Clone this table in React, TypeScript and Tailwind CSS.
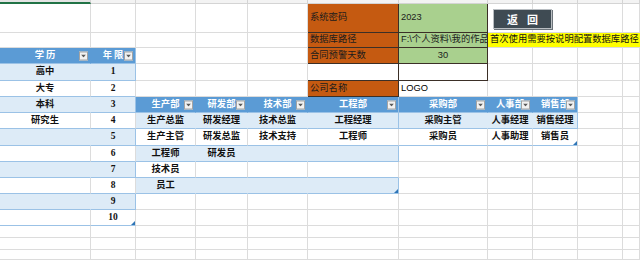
type Kind =
  | "top"
  | "topSel"
  | "plain"
  | "hdr"
  | "hdrE"
  | "band"
  | "bandE"
  | "row"
  | "orange"
  | "green"
  | "yellow"
  | "darkR"
  | "box";

interface CellDef {
  k: Kind;
  t?: string;
  left?: boolean;
  dd?: boolean;
  handle?: boolean;
  span?: boolean;
  num?: boolean;
  wide?: boolean;
}

const KIND: Record<Kind, string> = {
  top: "bg-[#f3f3f3] border-r border-b border-[#d4d4d4]",
  topSel: "bg-[#e4e4e4] border-r border-[#d4d4d4] border-b-2 border-b-[#217346]",
  plain: "bg-white border-r border-b border-[#dcdcdc]",
  hdr: "bg-[#5b9bd5] text-white font-bold border-r border-b border-r-[#5b9bd5] border-b-[#9bc2e6]",
  hdrE: "bg-[#5b9bd5] text-white font-bold border-r border-b border-r-[#9bc2e6] border-b-[#9bc2e6]",
  band: "bg-[#ddebf7] text-[#111] font-bold border-r border-b border-r-[#ddebf7] border-b-[#9bc2e6]",
  bandE: "bg-[#ddebf7] text-[#111] font-bold border-r border-b border-[#9bc2e6]",
  row: "bg-white text-[#111] font-bold border-r border-b border-[#dcdcdc] border-b-[#9bc2e6]",
  orange: "bg-[#c55a11] text-[#1c1c1c] border-r border-b border-[#3b2f27]",
  green: "bg-[#a9d08e] text-[#1c1c1c] border-r border-b border-[#3b2f27]",
  yellow: "bg-[#ffff00] text-[#111] border-b border-[#dcdcdc] col-span-4",
  darkR: "bg-white border-r border-b border-r-[#3b2f27] border-b-[#3b2f27]",
  box: "bg-white border-r border-b border-[#3b2f27]",
};

const P = (): CellDef => ({ k: "plain" });
const plains = (n: number): CellDef[] => Array.from({ length: n }, P);

const rows: CellDef[][] = [
  [{ k: "topSel" }, ...Array.from({ length: 10 }, (): CellDef => ({ k: "top" }))],
  [...plains(5), { k: "orange", t: "系统密码", left: true }, { k: "green", t: "2023", left: true }, ...plains(4)],
  [
    ...plains(5),
    { k: "orange", t: "数据库路径", left: true },
    { k: "green", t: "F:\\个人资料\\我的作品", left: true },
    { k: "yellow", t: "首次使用需要按说明配置数据库路径", left: true },
  ],
  [
    { k: "hdr", t: "学历", dd: true, wide: true },
    { k: "hdrE", t: "年限", dd: true, wide: true },
    ...plains(3),
    { k: "orange", t: "合同预警天数", left: true },
    { k: "green", t: "30" },
    ...plains(4),
  ],
  [{ k: "band", t: "高中" }, { k: "bandE", t: "1", num: true }, ...plains(3), { k: "darkR" }, { k: "box" }, ...plains(4)],
  [
    { k: "row", t: "大专" },
    { k: "row", t: "2", num: true },
    ...plains(3),
    { k: "orange", t: "公司名称", left: true },
    { k: "plain", t: "LOGO", left: true },
    ...plains(4),
  ],
  [
    { k: "band", t: "本科" },
    { k: "bandE", t: "3", num: true },
    { k: "hdr", t: "生产部", dd: true },
    { k: "hdr", t: "研发部", dd: true },
    { k: "hdr", t: "技术部", dd: true },
    { k: "hdrE", t: "工程部", dd: true },
    { k: "hdr", t: "采购部", dd: true },
    { k: "hdr", t: "人事部", dd: true },
    { k: "hdrE", t: "销售部", dd: true },
    ...plains(2),
  ],
  [
    { k: "row", t: "研究生" },
    { k: "row", t: "4", num: true },
    { k: "band", t: "生产总监" },
    { k: "band", t: "研发经理" },
    { k: "band", t: "技术总监" },
    { k: "bandE", t: "工程经理" },
    { k: "band", t: "采购主管" },
    { k: "band", t: "人事经理" },
    { k: "bandE", t: "销售经理" },
    ...plains(2),
  ],
  [
    { k: "band" },
    { k: "bandE", t: "5", num: true },
    { k: "row", t: "生产主管" },
    { k: "row", t: "研发总监" },
    { k: "row", t: "技术支持" },
    { k: "row", t: "工程师" },
    { k: "row", t: "采购员" },
    { k: "row", t: "人事助理" },
    { k: "row", t: "销售员", handle: true },
    ...plains(2),
  ],
  [
    { k: "row" },
    { k: "row", t: "6", num: true },
    { k: "band", t: "工程师" },
    { k: "band", t: "研发员" },
    { k: "band" },
    { k: "bandE" },
    ...plains(5),
  ],
  [{ k: "band" }, { k: "bandE", t: "7", num: true }, { k: "row", t: "技术员" }, { k: "row" }, { k: "row" }, { k: "row" }, ...plains(5)],
  [{ k: "row" }, { k: "row", t: "8", num: true }, { k: "band", t: "员工" }, { k: "band" }, { k: "band" }, { k: "bandE", handle: true }, ...plains(5)],
  [{ k: "band" }, { k: "bandE", t: "9", num: true }, ...plains(9)],
  [{ k: "row" }, { k: "row", t: "10", num: true, handle: true }, ...plains(9)],
  plains(11),
  plains(11),
  plains(11),
];

const Dropdown = () => (
  <span className="absolute right-[2px] top-1/2 -translate-y-1/2 w-[9px] h-[9px] bg-[#f2f2f2] border border-[#a3a3a3] flex items-center justify-center">
    <svg width="5" height="3" viewBox="0 0 5 3">
      <path d="M0 0h5L2.5 3z" fill="#5a5a5a" />
    </svg>
  </span>
);

const Handle = () => (
  <span className="absolute right-0 bottom-0 w-0 h-0 border-l-[4px] border-l-transparent border-b-[4px] border-b-[#2e75b6]" />
);

const Cell = ({ d }: { d: CellDef }) => {
  const align = d.left ? "justify-start pl-[2px]" : "justify-center";
  const font = d.num
    ? "font-['Liberation_Serif','Noto_Sans_CJK_SC',serif] font-bold text-[9.5px]"
    : d.wide
      ? "tracking-[2px] pl-[2px]"
      : "";
  return (
    <div className={`relative flex items-center overflow-hidden whitespace-nowrap ${KIND[d.k]} ${align} ${font}`}>
      {d.t}
      {d.dd && <Dropdown />}
      {d.handle && <Handle />}
    </div>
  );
};

const App = () => {
  return (
    <div className="relative w-[640px] h-[260px] overflow-hidden bg-white font-['Liberation_Sans','Noto_Sans_CJK_SC',sans-serif] text-[9.3px] leading-none">
      <div className="grid grid-cols-[91px_45px_60px_52px_60px_91px_89px_45px_45px_45px_17px] grid-rows-[4px_29px_15px_16px_17px_16px_16px_16px_17px_16px_16px_16px_16px_16px_12px_12px_10px]">
        {rows.map((r, i) => r.map((d, j) => <Cell key={`${i}-${j}`} d={d} />))}
      </div>
      {/* floating button shape over H1:I1 */}
      <button className="absolute left-[493px] top-[9px] w-[59px] h-[20px] bg-[#3f4b53] border border-[#b9bec2] shadow-[1px_1px_0_#6b7379] text-white font-bold text-[11px] tracking-[9px] pl-[9px] font-['Noto_Sans_CJK_SC',sans-serif]">
        返回
      </button>
    </div>
  );
};

export default App;
